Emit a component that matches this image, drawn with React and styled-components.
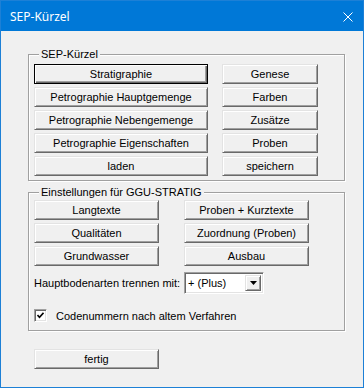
import React from 'react';
import styled, { createGlobalStyle } from 'styled-components';

const Global = createGlobalStyle`
  html, body { margin: 0; padding: 0; background: #ffffff; }
  body { font-family: "Liberation Sans", Arial, sans-serif; font-size: 11px; color: #000; }
  * { box-sizing: border-box; }
`;

const Window = styled.div`
  width: 364px;
  height: 388px;
  border: 1px solid #1d80d6;
  background: #f0f0f0;
  display: flex;
  flex-direction: column;
`;

const TitleBar = styled.div`
  height: 30px;
  flex: none;
  background: #0078d7;
  color: #ffffff;
  display: flex;
  align-items: center;
  justify-content: space-between;
  padding-left: 9px;
  font-family: "Noto Sans", "Open Sans", sans-serif;
  font-size: 12px;
`;

const CloseIcon = styled.svg`
  width: 10px;
  height: 10px;
  margin-right: 10px;
  margin-top: 1px;
`;

const Body = styled.div`
  flex: 1;
  display: flex;
  flex-direction: column;
  align-items: flex-start;
  padding: 23px 0 0 27px;
`;

const GroupBox = styled.div`
  position: relative;
  width: 317px;
  border: 1px solid #a0a0a0;
  box-shadow: 1px 1px 0 #ffffff, inset 1px 1px 0 #ffffff;
  padding: ${p => p.$pt}px 5px ${p => p.$pb}px 5px;
  margin-top: ${p => p.$mt || 0}px;
`;

const Legend = styled.span`
  position: absolute;
  top: -8px;
  left: 10px;
  padding: 0 2px;
  background: #f0f0f0;
  line-height: 14px;
  white-space: nowrap;
`;

const ButtonGrid = styled.div`
  display: grid;
  grid-template-columns: ${p => p.$cols};
  column-gap: ${p => p.$cgap}px;
  grid-auto-rows: 20px;
  row-gap: ${p => p.$rgap}px;
`;

const Button = styled.div`
  width: ${p => (p.$w ? `${p.$w}px` : 'auto')};
  height: 20px;
  display: flex;
  align-items: center;
  justify-content: center;
  background: #f0f0f0;
  white-space: nowrap;
  padding-bottom: 1px;
  ${p =>
    p.$default
      ? `border: 1px solid #000000;
         box-shadow: inset 1px 1px 0 #ffffff, inset -1px -1px 0 #696969, inset -2px -2px 0 #a0a0a0;`
      : `border-style: solid;
         border-width: 1px;
         border-color: #e3e3e3 #696969 #696969 #e3e3e3;
         box-shadow: inset 1px 1px 0 #ffffff, inset -1px -1px 0 #a0a0a0;`}
  margin-top: ${p => p.$mt || 0}px;
`;

const FieldRow = styled.div`
  display: flex;
  align-items: center;
  margin-top: ${p => p.$mt}px;
`;

const FieldLabel = styled.span`
  width: 150px;
  white-space: nowrap;
`;

const Select = styled.div`
  width: 80px;
  height: 22px;
  display: flex;
  align-items: stretch;
  background: #ffffff;
  border-style: solid;
  border-width: 1px;
  border-color: #a0a0a0 #ffffff #ffffff #a0a0a0;
  box-shadow: inset 1px 1px 0 #696969, inset -1px -1px 0 #e3e3e3;
  padding: 2px 2px 2px 3px;
`;

const SelectValue = styled.span`
  flex: 1;
  display: flex;
  align-items: center;
  padding-bottom: 1px;
`;

const ArrowButton = styled.div`
  width: 16px;
  display: flex;
  align-items: center;
  justify-content: center;
  background: #f0f0f0;
  border-style: solid;
  border-width: 1px;
  border-color: #e3e3e3 #696969 #696969 #e3e3e3;
  box-shadow: inset 1px 1px 0 #ffffff, inset -1px -1px 0 #a0a0a0;
`;

const Arrow = styled.svg`
  width: 7px;
  height: 4px;
`;

const CheckRow = styled.div`
  display: flex;
  align-items: center;
  gap: 9px;
  margin-top: ${p => p.$mt}px;
`;

const CheckBox = styled.div`
  width: 13px;
  height: 13px;
  background: #ffffff;
  border-style: solid;
  border-width: 1px;
  border-color: #a0a0a0 #ffffff #ffffff #a0a0a0;
  box-shadow: inset 1px 1px 0 #696969, inset -1px -1px 0 #e3e3e3;
  display: flex;
  align-items: center;
  justify-content: center;
`;

const CheckMark = styled.svg`
  width: 7px;
  height: 7px;
`;

const Footer = styled.div`
  margin-top: 18px;
  padding-left: 6px;
`;

const group1 = [
  ['Stratigraphie', 'Genese'],
  ['Petrographie Hauptgemenge', 'Farben'],
  ['Petrographie Nebengemenge', 'Zusätze'],
  ['Petrographie Eigenschaften', 'Proben'],
  ['laden', 'speichern'],
];

const group2 = [
  ['Langtexte', 'Proben + Kurztexte'],
  ['Qualitäten', 'Zuordnung (Proben)'],
  ['Grundwasser', 'Ausbau'],
];

export default function App() {
  return (
    <>
      <Global />
      <Window>
        <TitleBar>
          <span>SEP-Kürzel</span>
          <CloseIcon viewBox="0 0 10 10">
            <path d="M0.5 0.5 L9.5 9.5 M9.5 0.5 L0.5 9.5" stroke="#ffffff" strokeWidth="1" fill="none" />
          </CloseIcon>
        </TitleBar>
        <Body>
          <GroupBox $pt={9} $pb={4}>
            <Legend>SEP-Kürzel</Legend>
            <ButtonGrid $cols="174px 96px" $cgap={14} $rgap={3}>
              {group1.flatMap(([a, b], i) => [
                <Button key={a} $default={i === 0}>{a}</Button>,
                <Button key={b}>{b}</Button>,
              ])}
            </ButtonGrid>
          </GroupBox>
          <GroupBox $pt={7} $pb={8} $mt={11}>
            <Legend>Einstellungen für GGU-STRATIG</Legend>
            <ButtonGrid $cols="125px 125px" $cgap={25} $rgap={3}>
              {group2.flatMap(([a, b]) => [
                <Button key={a}>{a}</Button>,
                <Button key={b}>{b}</Button>,
              ])}
            </ButtonGrid>
            <FieldRow $mt={6}>
              <FieldLabel>Hauptbodenarten trennen mit:</FieldLabel>
              <Select>
                <SelectValue>+ (Plus)</SelectValue>
                <ArrowButton>
                  <Arrow viewBox="0 0 7 4">
                    <path d="M0 0 H7 L3.5 4 Z" fill="#000000" />
                  </Arrow>
                </ArrowButton>
              </Select>
            </FieldRow>
            <CheckRow $mt={15}>
              <CheckBox>
                <CheckMark viewBox="0 0 7 7">
                  <path d="M0.5 3 L2.5 5.2 L6.5 0.8" stroke="#000000" strokeWidth="1.6" fill="none" />
                </CheckMark>
              </CheckBox>
              <span>Codenummern nach altem Verfahren</span>
            </CheckRow>
          </GroupBox>
          <Footer>
            <Button $w={125}>fertig</Button>
          </Footer>
        </Body>
      </Window>
    </>
  );
}
